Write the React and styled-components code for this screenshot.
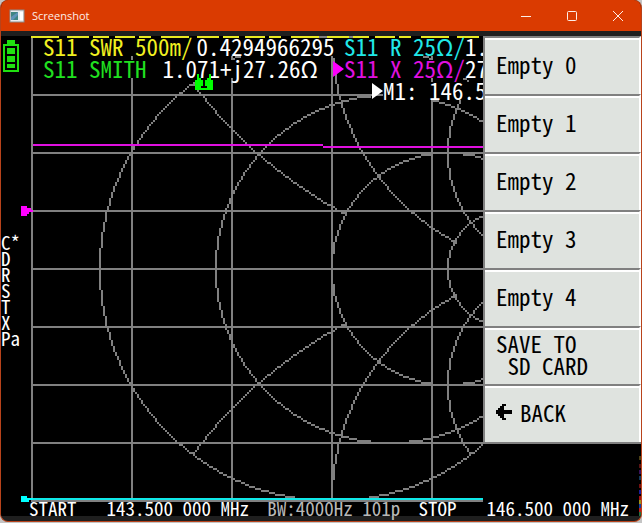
import React from "react";
import styled, { createGlobalStyle } from "styled-components";

const GlobalStyle = createGlobalStyle`
    * {
        box-sizing: border-box;
    }
    body {
        margin: 0;
        background-color: #c4c4c4;
    }
`;

const Window = styled.div`
    display: flex;
    flex-direction: column;
    overflow: hidden;
    border-radius: 8px;
    border: 1px solid #b8431b;
    border-top: none;
    background-color: #1f1f1f;
`;

const TitleBar = styled.header`
    display: flex;
    align-items: center;
    height: 31px;
    padding-left: 8px;
    background-color: #da3b01;
    color: #fdeee8;
    font-family: "Open Sans", "Noto Sans", sans-serif;
    font-size: 11px;
`;

const Title = styled.h1`
    flex: 1;
    margin: 0 0 0 7px;
    font-size: inherit;
    font-weight: normal;
`;

const WindowButton = styled.button`
    display: flex;
    align-items: center;
    justify-content: center;
    width: 46px;
    height: 30px;
    padding: 0;
    border: none;
    background: none;
    color: inherit;
`;

const Screen = styled.main`
    position: relative;
    margin: 5px 0;
    background-color: black;
    color: white;
    font-family: "Noto Sans Mono CJK SC", "DejaVu Sans Mono", monospace;
    font-size: 23px;
    line-height: 16px;
    white-space: pre;
`;

const Plot = styled.svg`
    display: block;
    width: 100%;
`;

/* everything written on top of the plot */
const Overlay = styled.div`
    position: absolute;
    inset: 0;
    display: flex;
    flex-direction: column;
    justify-content: space-between;
`;

const Upper = styled.div`
    display: flex;
    align-items: flex-start;
`;

const Readings = styled.div`
    flex: 1;
    min-width: 0;
    overflow: hidden;
`;

const ReadingRow = styled.div`
    display: flex;
    margin: 2px 0 4px 42px;
`;

const Trace = styled.div`
    display: flex;
    flex-shrink: 0;
    gap: ${props => props.gap || "0"};
    width: ${props => props.width || "auto"};
    color: ${props => props.color || "white"};
`;

const Label = styled.span`
    padding-bottom: 2px;
    background-color: black;
`;

const Value = styled(Label)`
    color: white;
`;

const Pointer = styled.svg`
    flex-shrink: 0;
    width: 12px;
    height: 18px;
    margin-left: -12px;
    fill: ${props => props.color};
`;

const MarkerRow = styled(ReadingRow)`
    margin-left: 382px;
`;

const States = styled.ul`
    margin: 134px 0 0;
    padding: 0;
    list-style: none;
    font-size: 19px;
`;

const Menu = styled.nav`
    width: 158px;
    flex-shrink: 0;
    border-left: 2px solid #808080;
    border-bottom: 2px solid #808080;
`;

const MenuButton = styled.button`
    display: flex;
    align-items: center;
    width: 100%;
    height: 58px;
    padding: 0 0 4px 11px;
    border: none;
    border-top: 2px solid #808080;
    border-right: 2px solid white;
    box-shadow: inset 0 2px white;
    background-color: #dfe3df;
    color: black;
    font: inherit;
    line-height: 22px;
    text-align: left;
    white-space: pre;
`;

const BackArrow = styled.svg`
    width: 16px;
    height: 16px;
    margin-right: 8px;
`;

const Footer = styled.footer`
    display: flex;
    justify-content: space-between;
    height: 14px;
    padding: 0 12px 0 28px;
    font-size: 19px;
    line-height: 12px;
`;

const Sweep = styled.div`
    display: flex;
    gap: 30px;
    color: ${props => props.color || "white"};
`;

const MarkerBadge = styled.svg`
    position: absolute;
    left: 194px;
    top: 36px;
    width: 18px;
    height: 18px;
`;

const cell = (x, y) => `M${x} ${y}h1v1h-1z`;

// circle outline on the 320x240 display grid
const circle = (cx, cy, r, visible = () => true) => {
    const cells = new Set();
    const add = (x, y) => {
        if (x >= 16 && x < 241 && y >= 0 && y <= 232 && visible(x, y)) {
            cells.add(cell(x, y));
        }
    };
    for (let i = 0; i <= Math.ceil(r * 0.7072); i++) {
        const j = Math.round(Math.sqrt(r * r - i * i));
        [[i, j], [j, i]].forEach(([a, b]) => {
            add(cx + a, cy + b);
            add(cx + a, cy - b);
            add(cx - a, cy + b);
            add(cx - a, cy - b);
        });
    }
    return [...cells].join("");
};

const within = (x, y, cx, r) => Math.hypot(x - cx, y - 116) <= r;
const reactance = (r, hiddenR) =>
    [116 - r, 116 + r]
        .map(cy => circle(281, cy, r, (x, y) =>
            within(x, y, 165, 116) && !(hiddenR && within(x, y, 281 - hiddenR, hiddenR - 1))))
        .join("");

const smithPath = [
    circle(165, 116, 116),
    circle(194, 116, 87),
    circle(223, 116, 58),
    circle(252, 116, 29),
    reactance(232, 58),
    reactance(116, 29),
    reactance(58),
].join("");

const columns = [15, 65, 115, 165, 215];
const rows = [0, 29, 58, 87, 116, 145, 174, 203, 232];
const gridPath =
    columns.map(x => `M${x} 0h1v233h-1z`).join("") +
    rows.slice(1).map(y => `M15 ${y}h226v1h-226z`).join("");

const noise = [
    [210, "#4c4014"], [214, "#5a1414"], [217, "#3a125c"], [220, "#123a5c"],
    [224, "#731010"], [227, "#1c1c9c"], [230, "#a31212"], [232, "#a09018"],
    [234, "#1240a0"], [236, "#c01c1c"], [238, "#207040"],
];

const Instrument = () => (
    <Plot viewBox="0 0 320 240" shapeRendering="crispEdges">
        <path d={gridPath + smithPath} fill="#808080" />
        <path d="M15 .5H241" stroke="#e8e820" strokeDasharray="14 4 11 2 8 3 10 2 6 5" />
        <path d="M16 54.5H161M161 55.5H241" stroke="#e010e0" />
        <path d="M16 231.5H241" stroke="#10e8e8" />
        <path d="M10 230h3v1h3v1h-2v1h-4z" fill="#00ffff" />
        <path d="M10 85h3v1h2v1h1v1h-2v1h-1v1h-3z" fill="#ff00ff" />
        {/* battery */}
        <path d="M3 2h4v2h2v14H1V4h2zM2 5v12h6V5z" fill="#20e010" fillRule="evenodd" />
        <path d="M3 6h4v3h-4zM3 10h4v3h-4zM3 14h4v2h-4z" fill="#20e010" />
        {noise.map(([y, fill]) => (
            <rect key={y} x="319" y={y} width="1" height="2" fill={fill} />
        ))}
    </Plot>
);

const menuItems = ["Empty 0", "Empty 1", "Empty 2", "Empty 3", "Empty 4", "SAVE TO\n SD CARD"];
const states = ["C*", "D", "R", "S", "T", "X", "Pa"];

const App = () => (
    <>
        <GlobalStyle />
        <Window>
            <TitleBar>
                <svg width="16" height="14" viewBox="0 0 16 14">
                    <rect x="1" y="1" width="14" height="12" fill="#e9edf0" stroke="#8c8c8c" />
                    <rect x="2" y="3" width="7" height="8" fill="#3f8583" />
                    <path d="M2 11V8l7-5v3l-5 5z" fill="#5f93b8" />
                    <rect x="11" y="3" width="3" height="8" fill="#fff" />
                </svg>
                <Title>Screenshot</Title>
                <WindowButton aria-label="Minimize">
                    <svg width="10" height="10"><path d="M0 5.5h10" stroke="currentColor" /></svg>
                </WindowButton>
                <WindowButton aria-label="Maximize">
                    <svg width="10" height="10">
                        <rect x=".5" y=".5" width="9" height="9" rx="1" fill="none" stroke="currentColor" />
                    </svg>
                </WindowButton>
                <WindowButton aria-label="Close">
                    <svg width="10" height="10"><path d="M0 0l10 10M10 0L0 10" stroke="currentColor" /></svg>
                </WindowButton>
            </TitleBar>
            <Screen>
                <Instrument />
                <Overlay>
                    <Upper>
                        <Readings>
                            <ReadingRow>
                                <Trace color="#f0f020" width="301px" gap="4px">
                                    <Label>S11 SWR 500m/</Label>
                                    <Value>0.4294966295</Value>
                                </Trace>
                                <Trace color="#20e8e8">
                                    <Label>S11 R 25Ω/</Label>
                                    <Value>1.</Value>
                                </Trace>
                            </ReadingRow>
                            <ReadingRow>
                                <Trace color="#20e020" width="301px" gap="16px">
                                    <Label>S11 SMITH</Label>
                                    <Value>1.071+j27.26Ω</Value>
                                </Trace>
                                <Pointer color="#ff00ff" viewBox="0 0 12 18">
                                    <path d="M1 1L12 9L1 17z" />
                                </Pointer>
                                <Trace color="#e010e0">
                                    <Label>S11 X 25Ω/</Label>
                                    <Value>27</Value>
                                </Trace>
                            </ReadingRow>
                            <MarkerRow>
                                <Pointer color="#ffffff" viewBox="0 0 12 18">
                                    <path d="M1 1L12 9L1 17z" />
                                </Pointer>
                                <Label>M1: 146.5</Label>
                            </MarkerRow>
                            <States>
                                {states.map(state => <li key={state}>{state}</li>)}
                            </States>
                        </Readings>
                        <Menu>
                            {menuItems.map(item => <MenuButton key={item}>{item}</MenuButton>)}
                            <MenuButton>
                                <BackArrow viewBox="0 0 8 8" shapeRendering="crispEdges">
                                    <path d="M3 0h2v1h-1v2h4v2h-4v2h1v1h-2v-1h-1v-1h-1v-1h-1v-2h1v-1h1v-1h1z" />
                                </BackArrow>
                                BACK
                            </MenuButton>
                        </Menu>
                    </Upper>
                    <Footer>
                        <Sweep><span>START</span><span>143.500 000 MHz</span></Sweep>
                        <Sweep color="#b8b8b8">BW:4000Hz 101p</Sweep>
                        <Sweep><span>STOP</span><span>146.500 000 MHz</span></Sweep>
                    </Footer>
                    <MarkerBadge viewBox="0 0 9 9" shapeRendering="crispEdges">
                        <path d="M0 9V4H1V1H2V3H3V4H6V3H7V1H8V4H9V9Z" fill="#00ff00" />
                        <path d="M4 4h1v3h1v1h-3v-1h1z" fill="#000" />
                    </MarkerBadge>
                </Overlay>
            </Screen>
        </Window>
    </>
);

export default App;
